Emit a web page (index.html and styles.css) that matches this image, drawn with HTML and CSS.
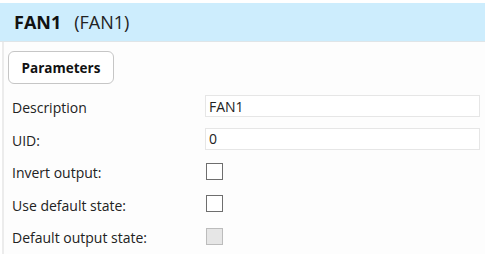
FILE: index.html
```html
<!DOCTYPE html>
<html lang="en">
<head>
    <meta charset="UTF-8">
    <title>FAN1</title>
    <link rel="stylesheet" href="styles.css">
</head>
<body>
    <div class="title-bar">
        <span class="title-name">FAN1</span>
        <span class="title-id">(FAN1)</span>
    </div>
    <div class="panel">
        <div class="tabs">
            <button class="tab">Parameters</button>
        </div>
        <div class="form">
            <label class="label">Description</label>
            <input class="field" type="text" value="FAN1">

            <label class="label">UID:</label>
            <input class="field" type="text" value="0">

            <label class="label">Invert output:</label>
            <span class="check"></span>

            <label class="label">Use default state:</label>
            <span class="check"></span>

            <label class="label">Default output state:</label>
            <span class="check disabled"></span>
        </div>
    </div>
</body>
</html>
```

FILE: styles.css
```css
body {
    margin: 0;
    background: #ffffff;
    font-family: "Open Sans", "Noto Sans", sans-serif;
    color: #1e1e1e;
}
.title-bar {
    margin-top: 3px;
    height: 38px;
    background: #cdedfd;
    border-bottom: 1px solid #dfe5e8;
    display: flex;
    align-items: center;
    padding-left: 14px;
    gap: 13px;
    font-size: 18px;
}
.title-name {
    font-weight: 700;
    color: #111;
}
.title-id {
    font-weight: 400;
    color: #222;
}
.panel {
    margin-left: 2px;
    border-left: 2px solid #ececec;
    background: #fdfdfd;
    height: 203px;
    padding: 9px 5px 0 4px;
}
.tab {
    font-family: inherit;
    font-size: 13.5px;
    font-weight: 700;
    color: #111;
    background: #ffffff;
    border: 1px solid #c6c6c6;
    border-radius: 6px;
    width: 106px;
    height: 33px;
    padding: 0;
}
.form {
    margin-top: 6px;
    padding-left: 4px;
    display: grid;
    grid-template-columns: 193px 1fr;
    grid-auto-rows: 32.5px;
    align-items: center;
}
.label {
    font-size: 14px;
    color: #222;
    padding-top: 3px;
}
.field {
    font-family: inherit;
    font-size: 14px;
    color: #222;
    height: 22px;
    box-sizing: border-box;
    border: 1px solid #e6e6e6;
    background: #fff;
    padding: 0 3px;
    outline: none;
}
.check {
    width: 17px;
    height: 17px;
    box-sizing: border-box;
    border: 1px solid #6e6e6e;
    background: #fff;
    margin-left: 1px;
}
.check.disabled {
    border-color: #bcbcbc;
    background: #e6e6e6;
}
```
